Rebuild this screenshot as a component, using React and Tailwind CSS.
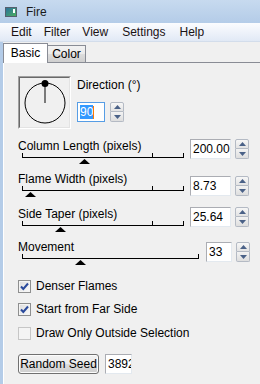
const FONT = "font-['Liberation_Sans',Arial,sans-serif]";
const LABEL = "font-['Liberation_Sans_Narrow','Liberation_Sans',Arial,sans-serif] text-[12px] leading-[13px] text-black whitespace-nowrap";

function Spinner() {
  return (
    <div className="flex flex-col w-[14px] h-[20px]">
      <div className="h-[10px] flex items-center justify-center border border-[#b4bac4] rounded-t-[2px] bg-gradient-to-b from-[#f7f7f7] to-[#e3e3e3]">
        <svg width="7" height="4" viewBox="0 0 7 4" className="block">
          <path d="M3.5 0L7 4H0Z" fill="#4a6187" />
        </svg>
      </div>
      <div className="h-[10px] flex items-center justify-center border border-t-0 border-[#b4bac4] rounded-b-[2px] bg-gradient-to-b from-[#f3f3f3] to-[#dedede]">
        <svg width="7" height="4" viewBox="0 0 7 4" className="block">
          <path d="M0 0H7L3.5 4Z" fill="#4a6187" />
        </svg>
      </div>
    </div>
  );
}

function Field({ value, className }) {
  return (
    <div
      className={`h-[20px] bg-white border border-[#e3e9ef] border-t-[#abadb3] border-l-[#abadb3] flex items-center pl-[2px] overflow-hidden text-[12px] leading-[14px] whitespace-nowrap ${className}`}
    >
      {value}
    </div>
  );
}

function Track({ width, ticks, thumb }) {
  const end = ticks[ticks.length - 1];
  return (
    <svg width={width} height="14" className="block">
      <line x1="4" y1="4.5" x2={end + 1} y2="4.5" stroke="#000" />
      {ticks.map((t) => (
        <line key={t} x1={t + 0.5} y1="0" x2={t + 0.5} y2="5" stroke="#000" />
      ))}
      <path d={`M${thumb + 0.5} 6 L${thumb + 6} 11 L${thumb - 5} 11Z`} fill="#000" />
    </svg>
  );
}

function SliderRow({ label, value, thumb, ticks, rowClass, inputClass, colClass, fieldClass, width }) {
  return (
    <div className={`flex items-start ${rowClass}`}>
      <div className={colClass}>
        <div className={LABEL}>{label}</div>
        <Track width={width} ticks={ticks} thumb={thumb} />
      </div>
      <div className={`flex items-start gap-[4px] ml-[2px] ${inputClass}`}>
        <Field value={value} className={fieldClass} />
        <Spinner />
      </div>
    </div>
  );
}

function Check({ checked, disabled, label, className }) {
  return (
    <div className={`flex items-center h-[13px] ${className}`}>
      <div
        className={`w-[13px] h-[13px] border flex items-center justify-center ${
          disabled
            ? 'border-[#c6c6c6] bg-[#f4f4f4]'
            : 'border-[#8e8f8f] bg-gradient-to-br from-[#dcdcdc] to-[#fbfbfb] shadow-[inset_0_0_0_1px_#f4f4f4]'
        }`}
      >
        {checked && (
          <svg width="11" height="11" viewBox="0 0 11 11" className="block">
            <path d="M2 5.5L4.3 8L9 2.5" fill="none" stroke="#2a4a9c" strokeWidth="2" />
          </svg>
        )}
      </div>
      <span className={`ml-[5px] ${LABEL} ${disabled ? 'text-[#a3a3a3]' : ''}`}>{label}</span>
    </div>
  );
}

export default function App() {
  return (
    <div className={`w-[260px] h-[384px] overflow-hidden flex flex-col ${FONT}`}>
      {/* title bar */}
      <div className="h-[23px] flex items-center pl-[5px] bg-gradient-to-b from-[#c7daef] to-[#b4cce8]">
        <div className="w-[12px] h-[10px] border border-[#55606e] bg-gradient-to-br from-[#2e6f98] to-[#4fae5a] flex items-start justify-end">
          <div className="w-[2px] h-[4px] bg-white mr-[1px] mt-[1px]"></div>
        </div>
        <span className="ml-[9px] text-[12px] text-[#1a1a1a]">Fire</span>
      </div>

      {/* menu bar */}
      <div className="h-[19px] flex items-center text-[12px] text-[#1a1214] bg-gradient-to-b from-[#fbfcfe] to-[#e1e9f5] border-b border-[#d3ddeb]">
        <span className="ml-[11px]">Edit</span>
        <span className="ml-[12px]">Filter</span>
        <span className="ml-[12px]">View</span>
        <span className="ml-[14px]">Settings</span>
        <span className="ml-[14px]">Help</span>
      </div>

      <div className="flex-1 flex">
        <div className="w-[3px] bg-[#b4cce8]"></div>
        <div className="flex-1 flex flex-col bg-[#f0f0f0]">
          {/* tabs */}
          <div className="mt-[1px] h-[20px] flex items-end">
            <div className="w-[45px] h-[20px] border-t border-l border-r border-[#898c95] bg-white flex items-center justify-center pb-[1px]">
              <span className={LABEL}>Basic</span>
            </div>
            <div className="w-[38px] h-[18px] border-t border-r border-b border-[#898c95] bg-[linear-gradient(to_bottom,#f2f2f2_0%,#ebebeb_50%,#dddddd_50%,#cfcfcf_100%)] flex items-center justify-center">
              <span className={LABEL}>Color</span>
            </div>
            <div className="flex-1 h-[20px] border-b border-[#898c95]"></div>
          </div>

          {/* panel */}
          <div className="flex-1 border-l border-white pl-[14px] flex flex-col">
            <div className="mt-[13px] flex items-start">
              <div className="w-[53px] h-[53px] border border-t-[#a0a0a0] border-l-[#a0a0a0] border-b-white border-r-white">
                <div className="w-full h-full border border-t-[#696969] border-l-[#696969] border-b-[#e3e3e3] border-r-[#e3e3e3]">
                  <svg width="49" height="49" viewBox="0 0 49 49" className="block">
                    <circle cx="25" cy="25" r="20" fill="none" stroke="#000" strokeWidth="1" />
                    <line x1="25" y1="6" x2="25" y2="25" stroke="#7a7a7a" strokeWidth="2" />
                    <circle cx="25" cy="5.5" r="3.5" fill="#000" />
                  </svg>
                </div>
              </div>
              <div className="ml-[6px] flex flex-col">
                <div className={`mt-[3px] ${LABEL}`}>Direction (°)</div>
                <div className="mt-[10px] flex items-start gap-[5px]">
                  <div className="w-[28px] h-[20px] bg-white border border-[#569de5] flex items-center pl-[2px] text-[12px] leading-[14px]">
                    <span className="bg-[#3399ff] text-white">90</span>
                    <span className="w-[1px] h-[13px] bg-[#ff7b00]"></span>
                  </div>
                  <Spinner />
                </div>
              </div>
            </div>

            <SliderRow
              label="Column Length (pixels)"
              value="200.00"
              thumb={66}
              ticks={[4, 134, 165]}
              width={170}
              rowClass="mt-[11px]"
              inputClass="-mt-[1px]"
              colClass="w-[170px]"
              fieldClass="w-[41px]"
            />
            <SliderRow
              label="Flame Width (pixels)"
              value="8.73"
              thumb={12}
              ticks={[4, 134, 165]}
              width={170}
              rowClass="mt-[6px]"
              inputClass="mt-[3px]"
              colClass="w-[170px]"
              fieldClass="w-[41px]"
            />
            <SliderRow
              label="Side Taper (pixels)"
              value="25.64"
              thumb={42}
              ticks={[4, 134, 165]}
              width={170}
              rowClass="mt-[8px]"
              inputClass="-mt-[1px]"
              colClass="w-[170px]"
              fieldClass="w-[41px]"
            />
            <SliderRow
              label="Movement"
              value="33"
              thumb={62}
              ticks={[4, 180]}
              width={186}
              rowClass="mt-[6px]"
              inputClass="mt-[1px]"
              colClass="w-[186px]"
              fieldClass="w-[26px]"
            />

            <Check checked label="Denser Flames" className="mt-[12px]" />
            <Check checked label="Start from Far Side" className="mt-[10px]" />
            <Check disabled label="Draw Only Outside Selection" className="mt-[11px]" />

            <div className="mt-[14px] flex items-start">
              <div className="w-[81px] h-[20px] rounded-[3px] border border-[#707070] bg-[linear-gradient(to_bottom,#f2f2f2_0%,#ebebeb_50%,#dddddd_50%,#cfcfcf_100%)] shadow-[inset_0_0_0_1px_#fcfcfc] flex items-center justify-center">
                <span className={LABEL}>Random Seed</span>
              </div>
              <Field value="3892" className="ml-[6px] w-[27px]" />
            </div>
          </div>
        </div>
      </div>
    </div>
  );
}
